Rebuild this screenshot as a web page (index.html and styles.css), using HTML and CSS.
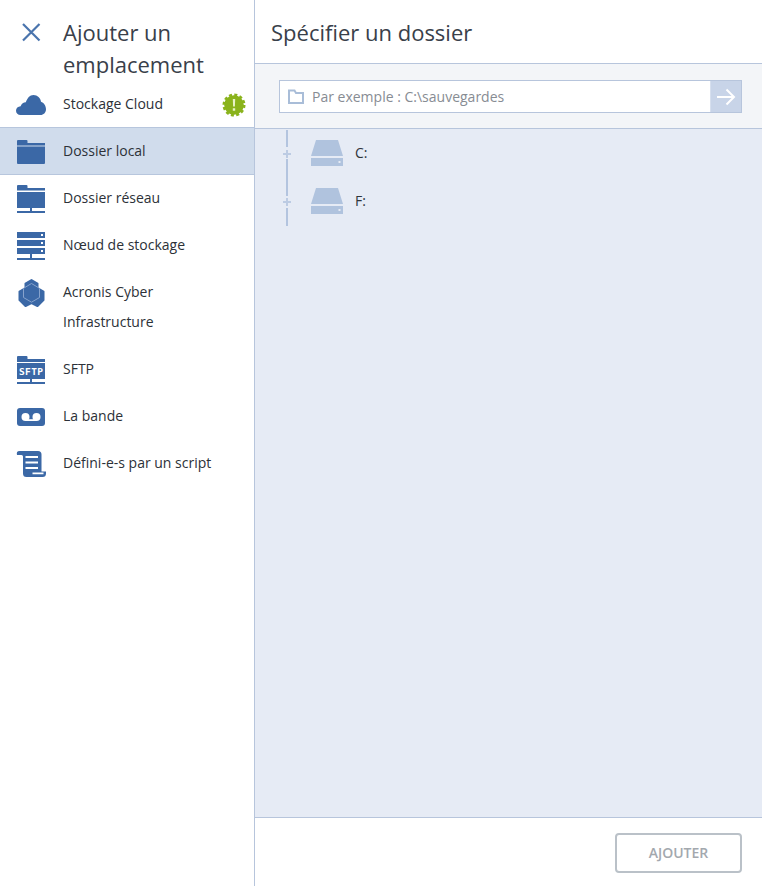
FILE: index.html
```html
<!DOCTYPE html>
<html lang="fr">
<head>
<meta charset="utf-8">
<title>Ajouter un emplacement</title>
<link rel="stylesheet" href="styles.css">
</head>
<body>
<div class="app">
  <aside class="sidebar">
    <header class="side-head">
      <svg class="close" width="20" height="20" viewBox="0 0 20 20"><path d="M2 2 18.500 18.500M18.500 2 2 18.500"/></svg>
      <h1 class="title side-title">Ajouter un emplacement</h1>
    </header>
    <nav class="menu">
      <div class="item">
        <svg class="ico" viewBox="0 0 30 30"><path d="M4.500 26C2 26 0 24.300 0 21.800 0 19.200 2 17.300 4.600 17.200 5.600 14.500 7.500 13.200 9.800 13.200 11.300 9.200 13.600 6 17.500 6 21.500 6 24.500 9 25 12.700 27.700 13.600 30 16.500 30 20.200 30 23.500 27.500 26 24.500 26Z"/></svg>
        <span class="label">Stockage Cloud</span>
        <svg class="badge" width="24" height="24" viewBox="0 0 24 24"><circle cx="12" cy="12" r="9.800" class="b-fill"/><circle cx="12" cy="12" r="10.200" class="b-teeth"/><path class="b-mark" d="M10.800 6h2.400l-.3 7.500h-1.800zM10.800 15.200h2.400v2.500h-2.400z"/></svg>
      </div>
      <div class="item selected">
        <svg class="ico" viewBox="0 0 30 30"><path d="M1 5a1 1 0 0 1 1-1h8.500a1 1 0 0 1 1 1v2H29v2.500H1zM1 10.500h28V27a1 1 0 0 1-1 1H2a1 1 0 0 1-1-1z"/></svg>
        <span class="label">Dossier local</span>
      </div>
      <div class="item">
        <svg class="ico" viewBox="0 0 30 30"><path d="M1 3a1 1 0 0 1 1-1h8.500a1 1 0 0 1 1 1v2H29v2.500H1zM1 9h28v16H1zM14 25h2v3h13v2H1v-2h13z"/></svg>
        <span class="label">Dossier réseau</span>
      </div>
      <div class="item">
        <svg class="ico" viewBox="0 0 30 30"><path fill-rule="evenodd" d="M1 2h28v6H1zM25 4v2h2V4zM1 10h28v6H1zM25 12v2h2v-2zM1 18h28v6H1zM25 20v2h2v-2zM14 24h2v4h13v2H1v-2h13z"/></svg>
        <span class="label">Nœud de stockage</span>
      </div>
      <div class="item">
        <svg class="ico" viewBox="0 0 30 30"><path class="hex-outer" d="M15.500 3 21.500 6.500V11L27.500 14.500V23L21.500 29 15.500 26 9.500 29 3.500 23V14.500L9.500 11V6.500Z"/><path class="hex-inner" d="M15.500 6.500 23.500 11.300V20.500L15.500 25.200 7.500 20.500V11.300Z"/></svg>
        <span class="label">Acronis Cyber Infrastructure</span>
      </div>
      <div class="item">
        <svg class="ico" viewBox="0 0 30 30"><path d="M1 3a1 1 0 0 1 1-1h8.500a1 1 0 0 1 1 1v2H29v3H1zM1 9h28v16H1zM14 25h2v3h13v2H1v-2h13z"/><text class="sftp" x="15" y="21" text-anchor="middle" textLength="24">SFTP</text></svg>
        <span class="label">SFTP</span>
      </div>
      <div class="item">
        <svg class="ico" viewBox="0 0 30 30"><rect x="1" y="7" width="28" height="18" rx="3"/><circle class="tape" cx="9.500" cy="16" r="4"/><circle class="tape" cx="20.500" cy="16" r="4"/><rect class="tape" x="9.500" y="18.200" width="11" height="1.800"/></svg>
        <span class="label">La bande</span>
      </div>
      <div class="item">
        <svg class="ico" viewBox="0 0 30 30"><path d="M3.500 3H22Q25.500 3 25.500 6.500V23.500H30V25.500Q30 29 26.500 29H10.500Q7 29 7 25.500V8.500Q7 7 5.500 7H1Q0 3 3.500 3Z"/><path class="lines" d="M9.500 8h12.500v2H9.500zM9.500 13.500h12.500v2H9.500zM9.500 19h12.500v2H9.500zM16.500 24.500h11v1.800h-11z"/></svg>
        <span class="label">Défini-e-s par un script</span>
      </div>
    </nav>
  </aside>
  <main class="content">
    <header class="main-head"><h2 class="title">Spécifier un dossier</h2></header>
    <section class="toolbar">
      <div class="path">
        <div class="path-field">
          <svg class="path-ico" width="16" height="15" viewBox="0 0 16 15"><path d="M1 1.500h5.500l1.500 2.500h7v10H1z"/></svg>
          <span class="placeholder">Par exemple : C:\sauvegardes</span>
        </div>
        <div class="path-go">
          <svg width="20" height="18" viewBox="0 0 20 18"><path d="M1 9h17M10.500 1.500 18 9l-7.500 7.500"/></svg>
        </div>
      </div>
    </section>
    <section class="tree">
      <div class="node">
        <svg class="conn" width="10" height="48" viewBox="0 0 10 48"><path class="conn-line" d="M5 1V18M5 30V48"/><path class="conn-plus" d="M1 25H9M5 21V29"/></svg>
        <svg class="drive" width="32" height="26" viewBox="0 0 32 26"><path fill-rule="evenodd" d="M5 0H27L32 16H0zM0 18H32V26H0zM27.500 21v2h2v-2z"/></svg>
        <span class="drive-name">C:</span>
      </div>
      <div class="node">
        <svg class="conn" width="10" height="49" viewBox="0 0 10 49"><path class="conn-line" d="M5 0V19M5 31V49"/><path class="conn-plus" d="M1 25H9M5 21V29"/></svg>
        <svg class="drive" width="32" height="26" viewBox="0 0 32 26"><path fill-rule="evenodd" d="M5 0H27L32 16H0zM0 18H32V26H0zM27.500 21v2h2v-2z"/></svg>
        <span class="drive-name">F:</span>
      </div>
    </section>
    <footer class="footer"><button class="add" type="button">AJOUTER</button></footer>
  </main>
</div>
</body>
</html>
```
FILE: styles.css
```css
* { box-sizing: border-box; }
html, body { margin: 0; height: 100%; }
body { font-family: "Open Sans", "Noto Sans", sans-serif; background: #fff; color: #2f343b; overflow: hidden; }
.app { display: flex; height: 886px; }

.sidebar { width: 255px; flex: none; border-right: 1px solid #b7c5dc; background: #fff; }
.side-head { display: flex; height: 81px; padding: 16px 16px 0 21px; }
.close { flex: none; margin: 6px 22px 0 0; }
.close path { fill: none; stroke: #4a74ad; stroke-width: 2.200; }
.title { margin: 0; font-size: 22px; line-height: 32px; font-weight: 400; color: #39404a; }
.side-title { width: 170px; }

.item { display: flex; align-items: flex-start; padding: 8px 8px 8px 16px; border-bottom: 1px solid transparent; font-size: 14px; line-height: 30px; color: #2c3138; }
.item.selected { background: #d0dcec; border-bottom-color: #b7c6dd; box-shadow: 0 -1px 0 #b7c6dd; }
.ico { flex: none; width: 30px; height: 30px; margin-right: 17px; fill: #3b68a6; }
.label { flex: 1; max-width: 160px; }
.badge { flex: none; margin: 4px 0 0 auto; }
.b-fill { fill: #8ab31c; }
.b-teeth { fill: none; stroke: #8ab31c; stroke-width: 2.600; stroke-dasharray: 3 2.340; }
.b-mark { fill: #e8f2c8; }
.hex-outer { stroke: #3b68a6; stroke-width: 2; stroke-linejoin: round; }
.hex-inner { fill: none; stroke: #86a2cc; stroke-width: 1; }
.sftp { font-family: "DejaVu Sans Mono", monospace; font-size: 9.500px; font-weight: 700; fill: #fff; }
.tape, .lines { fill: #fff; }

.content { flex: 1; display: flex; flex-direction: column; min-width: 0; }
.main-head { height: 64px; padding: 16px 16px 0; border-bottom: 1px solid #b7c5dc; }
.toolbar { height: 65px; padding: 16px 20px 0 24px; background: #f3f5f8; border-bottom: 1px solid #b7c5dc; }
.path { display: flex; height: 33px; border: 1px solid #b7c5dc; background: #fff; }
.path-field { flex: 1; display: flex; align-items: center; padding-left: 8px; }
.path-ico { flex: none; margin-right: 8px; }
.path-ico path { fill: none; stroke: #a9bdd8; stroke-width: 2; }
.placeholder { font-size: 14px; color: #878c93; }
.path-go { flex: none; width: 31px; display: flex; align-items: center; justify-content: center; background: #c8d4e8; border-left: 1px solid #d6dfee; }
.path-go path { fill: none; stroke: #fff; stroke-width: 2; }

.tree { flex: 1; padding-left: 27px; background: #e6ebf5; }
.node { display: flex; align-items: flex-start; height: 48px; }
.conn { flex: none; margin-right: 19px; overflow: visible; }
.conn-line { fill: none; stroke: #b3c4df; stroke-width: 2; }
.conn-plus { fill: none; stroke: #bccbe3; stroke-width: 2; }
.drive { flex: none; margin: 11px 12px 0 0; fill: #b0c3de; }
.drive-name { font-size: 14px; line-height: 48px; color: #2f343b; }

.footer { height: 69px; flex: none; display: flex; justify-content: flex-end; padding: 15px 20px 0 0; border-top: 1px solid #b7c5dc; }
.add { width: 127px; height: 40px; border: 2px solid #bac1c8; border-radius: 4px; background: #fff; font: 600 14px "Open Sans", sans-serif; color: #a3a8ae; padding: 0 0 1px; }
```
